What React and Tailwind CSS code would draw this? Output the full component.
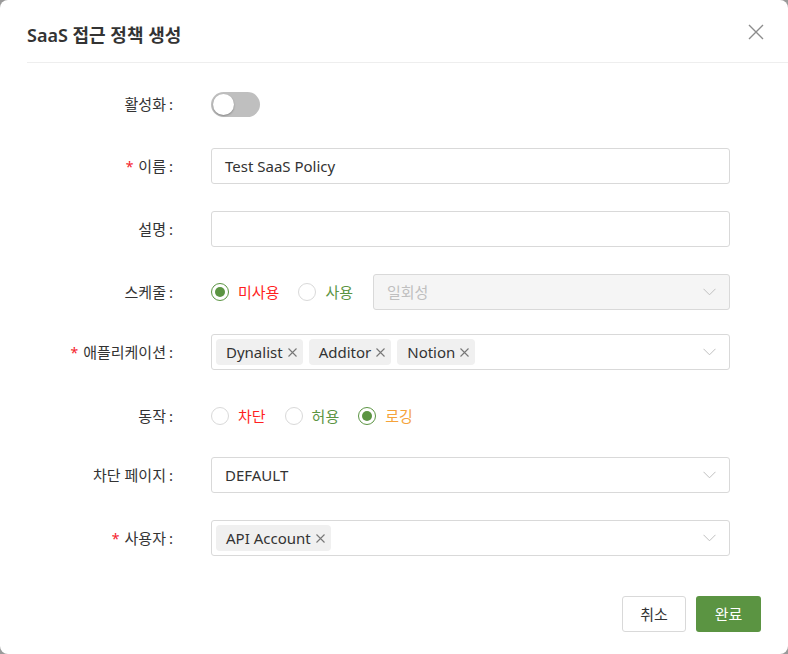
import React from "react";

const font = { fontFamily: '"Noto Sans", "Noto Sans CJK KR", sans-serif' };

function Chevron() {
  return (
    <svg width="13" height="8" viewBox="0 0 13 8" className="absolute right-[13px] top-1/2 -translate-y-1/2">
      <path d="M0.5 0.8 L6.5 6.8 L12.5 0.8" fill="none" stroke="#bfbfbf" strokeWidth="1" />
    </svg>
  );
}

function XIcon() {
  return (
    <svg width="9" height="9" viewBox="0 0 9 9" className="ml-[5px]">
      <path d="M0.5 0.5 L8.5 8.5 M8.5 0.5 L0.5 8.5" stroke="#777" strokeWidth="1.1" />
    </svg>
  );
}

function Tag({ children }) {
  return (
    <span className="flex items-center h-[26px] pl-[10px] pr-[6px] bg-[#f0f0f0] rounded-[4px] text-[15px] text-[#333]">
      {children}
      <XIcon />
    </span>
  );
}

function Radio({ checked, label, color }) {
  return (
    <span className="flex items-center">
      <span
        className={
          "w-[18px] h-[18px] rounded-full border flex items-center justify-center bg-white " +
          (checked ? "border-[#5b9442]" : "border-[#d9d9d9]")
        }
      >
        {checked && <span className="w-[10px] h-[10px] rounded-full bg-[#5b9442]" />}
      </span>
      <span className={"ml-[9px] text-[15px] " + color}>{label}</span>
    </span>
  );
}

function Row({ label, required, children, className }) {
  return (
    <div className={"flex items-center h-[36px] " + (className || "")}>
      <div className="w-[173px] flex justify-end items-center text-[15px] text-[#333]">
        {required && <span className="text-[#f5222d] mr-[5px] text-[14px]">*</span>}
        <span>{label}</span>
        <span className="ml-[3px]">:</span>
      </div>
      <div className="ml-[38px] w-[519px] flex items-center h-full">{children}</div>
    </div>
  );
}

export default function App() {
  return (
    <div className="w-[788px] h-[654px] bg-[#9a9a9a]" style={font}>
      <div className="w-full h-full bg-white rounded-[8px] flex flex-col">
        <div className="h-[63px] ml-[27px] border-b border-[#eeeeee] flex items-center justify-between pr-[24px]">
          <span className="text-[18px] font-semibold text-[#333] mt-[9px]">SaaS 접근 정책 생성</span>
          <svg width="16" height="16" viewBox="0 0 16 16" className="mt-[1px]">
            <path d="M1 1 L15 15 M15 1 L1 15" stroke="#8c8c8c" strokeWidth="1.4" />
          </svg>
        </div>
        <div className="pt-[23px] flex flex-col">
          <Row label="활성화">
            <span className="w-[49px] h-[25px] rounded-full bg-[#bfbfbf] flex items-center px-[2px]">
              <span className="w-[21px] h-[21px] rounded-full bg-white shadow-[0_1px_2px_rgba(0,0,0,0.3)]" />
            </span>
          </Row>
          <Row label="이름" required className="mt-[26px]">
            <div className="w-full h-full border border-[#d9d9d9] rounded-[3px] flex items-center px-[13px] text-[15px] text-[#333]">
              Test SaaS Policy
            </div>
          </Row>
          <Row label="설명" className="mt-[27px]">
            <div className="w-full h-full border border-[#d9d9d9] rounded-[3px]" />
          </Row>
          <Row label="스케줄" className="mt-[27px]">
            <div className="flex items-center">
              <Radio checked label="미사용" color="text-[#ff1f1f]" />
              <span className="ml-[19px]">
                <Radio label="사용" color="text-[#5b9442]" />
              </span>
            </div>
            <div className="relative ml-[20px] flex-1 h-full border border-[#d9d9d9] rounded-[3px] bg-[#f5f5f5] flex items-center px-[13px] text-[15px] text-[#bfbfbf]">
              일회성
              <Chevron />
            </div>
          </Row>
          <Row label="애플리케이션" required className="mt-[24px]">
            <div className="relative w-full h-full border border-[#d9d9d9] rounded-[3px] flex items-center pl-[4px] gap-[6px]">
              <Tag>Dynalist</Tag>
              <Tag>Additor</Tag>
              <Tag>Notion</Tag>
              <Chevron />
            </div>
          </Row>
          <Row label="동작" className="mt-[28px]">
            <div className="flex items-center">
              <Radio label="차단" color="text-[#ff1f1f]" />
              <span className="ml-[19px]">
                <Radio label="허용" color="text-[#5b9442]" />
              </span>
              <span className="ml-[19px]">
                <Radio checked label="로깅" color="text-[#f5a33b]" />
              </span>
            </div>
          </Row>
          <Row label="차단 페이지" className="mt-[23px]">
            <div className="relative w-full h-full border border-[#d9d9d9] rounded-[3px] flex items-center px-[13px] text-[15px] text-[#333]">
              DEFAULT
              <Chevron />
            </div>
          </Row>
          <Row label="사용자" required className="mt-[27px]">
            <div className="relative w-full h-full border border-[#d9d9d9] rounded-[3px] flex items-center pl-[4px]">
              <Tag>API Account</Tag>
              <Chevron />
            </div>
          </Row>
        </div>
        <div className="flex justify-end gap-[10px] pr-[27px] mt-[40px]">
          <button className="w-[64px] h-[36px] border border-[#d9d9d9] rounded-[3px] bg-white text-[15px] text-[#333]">
            취소
          </button>
          <button className="w-[65px] h-[36px] rounded-[3px] bg-[#5b9442] text-[15px] text-white">
            완료
          </button>
        </div>
      </div>
    </div>
  );
}
